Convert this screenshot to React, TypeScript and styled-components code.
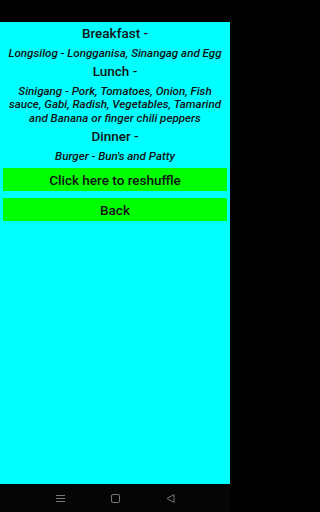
import React from 'react';
import styled, { createGlobalStyle } from 'styled-components';

const GlobalStyle = createGlobalStyle`
  html, body {
    margin: 0;
    padding: 0;
    background: #000;
  }
  body {
    font-family: Roboto, "Noto Sans", sans-serif;
  }
`;

const Screen = styled.div`
  width: 230px;
  height: 512px;
  display: flex;
  flex-direction: column;
  background: #000;
`;

const StatusBar = styled.div`
  height: 22px;
  background: #000;
`;

const Content = styled.div`
  flex: 1;
  background: #00ffff;
  padding: 1px 3px 0;
  display: flex;
  flex-direction: column;
  align-items: stretch;
`;

const Heading = styled.div`
  font-size: 13.5px;
  font-weight: 500;
  color: #111;
  text-align: center;
  line-height: 18px;
  margin-top: 1px;
`;

const Meal = styled.div`
  font-size: 11.6px;
  font-weight: 500;
  font-style: italic;
  color: #111;
  text-align: center;
  line-height: 13.5px;
  margin: 4.5px 0 1px;
`;

const Button = styled.button<{ $gap: number }>`
  border: none;
  background: #00ff00;
  height: 23px;
  margin-top: ${p => p.$gap}px;
  font-family: Roboto, "Noto Sans", sans-serif;
  font-size: 13.5px;
  font-weight: 500;
  color: #111;
  padding: 0;
`;

const Buttons = styled.div`
  display: flex;
  flex-direction: column;
`;

const NavBar = styled.div`
  height: 28px;
  background: #050505;
  display: flex;
  align-items: center;
  justify-content: center;
  gap: 42px;
`;

const NavIcon = styled.svg`
  width: 13px;
  height: 13px;
`;

export default function App() {
  return (
    <>
      <GlobalStyle />
      <Screen>
        <StatusBar />
        <Content>
          <Heading>Breakfast -</Heading>
          <Meal>Longsilog - Longganisa, Sinangag and Egg</Meal>
          <Heading>Lunch -</Heading>
          <Meal>
            Sinigang - Pork, Tomatoes, Onion, Fish sauce, Gabi, Radish, Vegetables, Tamarind and Banana or finger chili peppers
          </Meal>
          <Heading>Dinner -</Heading>
          <Meal>Burger - Bun's and Patty</Meal>
          <Buttons>
            <Button $gap={4}>Click here to reshuffle</Button>
            <Button $gap={7}>Back</Button>
          </Buttons>
        </Content>
        <NavBar>
          <NavIcon viewBox="0 0 13 13">
            <path d="M2 3.5h9M2 6.5h9M2 9.5h9" stroke="#777" strokeWidth="1" fill="none" />
          </NavIcon>
          <NavIcon viewBox="0 0 13 13">
            <rect x="2.5" y="2.5" width="8" height="8" rx="1.5" stroke="#777" strokeWidth="1" fill="none" />
          </NavIcon>
          <NavIcon viewBox="0 0 13 13">
            <path d="M10 2.5v8L3 6.5z" stroke="#777" strokeWidth="1" fill="none" strokeLinejoin="round" />
          </NavIcon>
        </NavBar>
      </Screen>
    </>
  );
}
